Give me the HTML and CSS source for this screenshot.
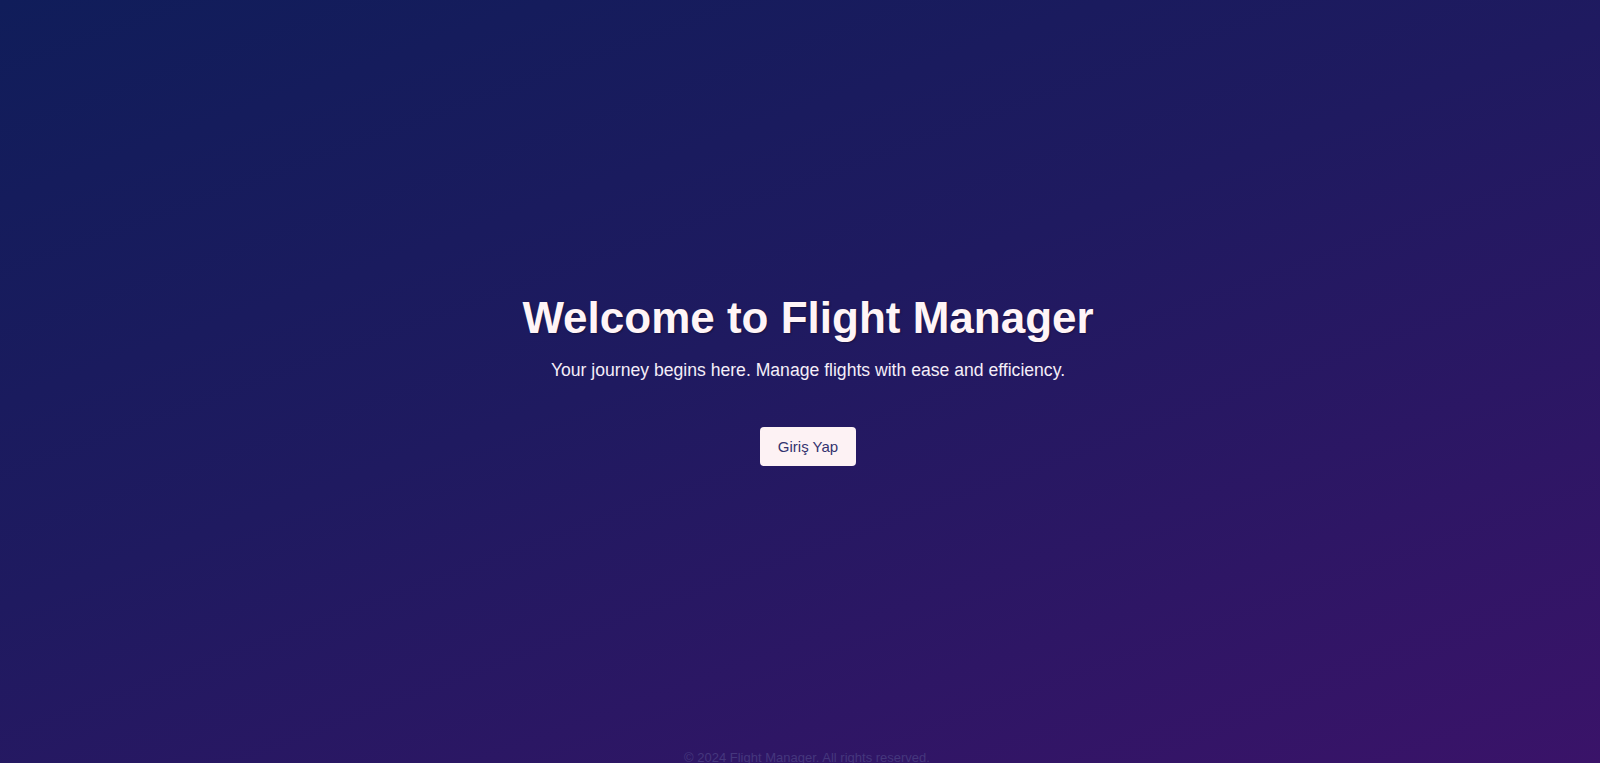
FILE: index.html
```html
<!DOCTYPE html>
<html lang="tr">
<head>
<meta charset="utf-8">
<title>Flight Manager</title>
<link rel="stylesheet" href="styles.css">
</head>
<body>
<main class="hero">
  <div class="hero-content">
    <h1 class="hero-title">Welcome to Flight Manager</h1>
    <p class="hero-subtitle">Your journey begins here. Manage flights with ease and efficiency.</p>
    <a class="hero-button" href="#">Giriş Yap</a>
  </div>
</main>
<footer class="footer">
  <p class="footer-text">© 2024 Flight Manager. All rights reserved.</p>
</footer>
</body>
</html>
```
FILE: styles.css
```css
* { box-sizing: border-box; }
html, body { margin: 0; padding: 0; }
body {
  font-family: "Liberation Sans", Arial, sans-serif;
  background: linear-gradient(160deg, #101d5a 0%, #1f1a60 45%, #3a1369 100%);
  min-height: 100vh;
  color: #fff5f7;
  overflow: hidden;
}
.hero {
  height: 749px;
  padding-left: 16px;
  display: flex;
  align-items: center;
  justify-content: center;
  text-align: center;
}
.hero-content {
  display: flex;
  flex-direction: column;
  align-items: center;
  margin-top: 9px;
}
.hero-title {
  margin: 0;
  font-size: 44px;
  font-weight: bold;
  color: #fff5f7;
  text-shadow: 1px 1px 2px rgba(0,0,0,0.3);
  line-height: 1.2;
}
.hero-subtitle {
  margin: 15px 0 0;
  font-size: 17.6px;
  color: #f5eef8;
}
.hero-button {
  margin-top: 46px;
  display: inline-block;
  padding: 11px 18px 11px;
  background: #fdf2f4;
  color: #33336f;
  text-decoration: none;
  font-size: 15px;
  border-radius: 4px;
}
.footer {
  text-align: center;
  padding-left: 14px;
}
.footer-text {
  margin: 0;
  font-size: 13px;
  color: #45377d;
  line-height: 18px;
}
```
